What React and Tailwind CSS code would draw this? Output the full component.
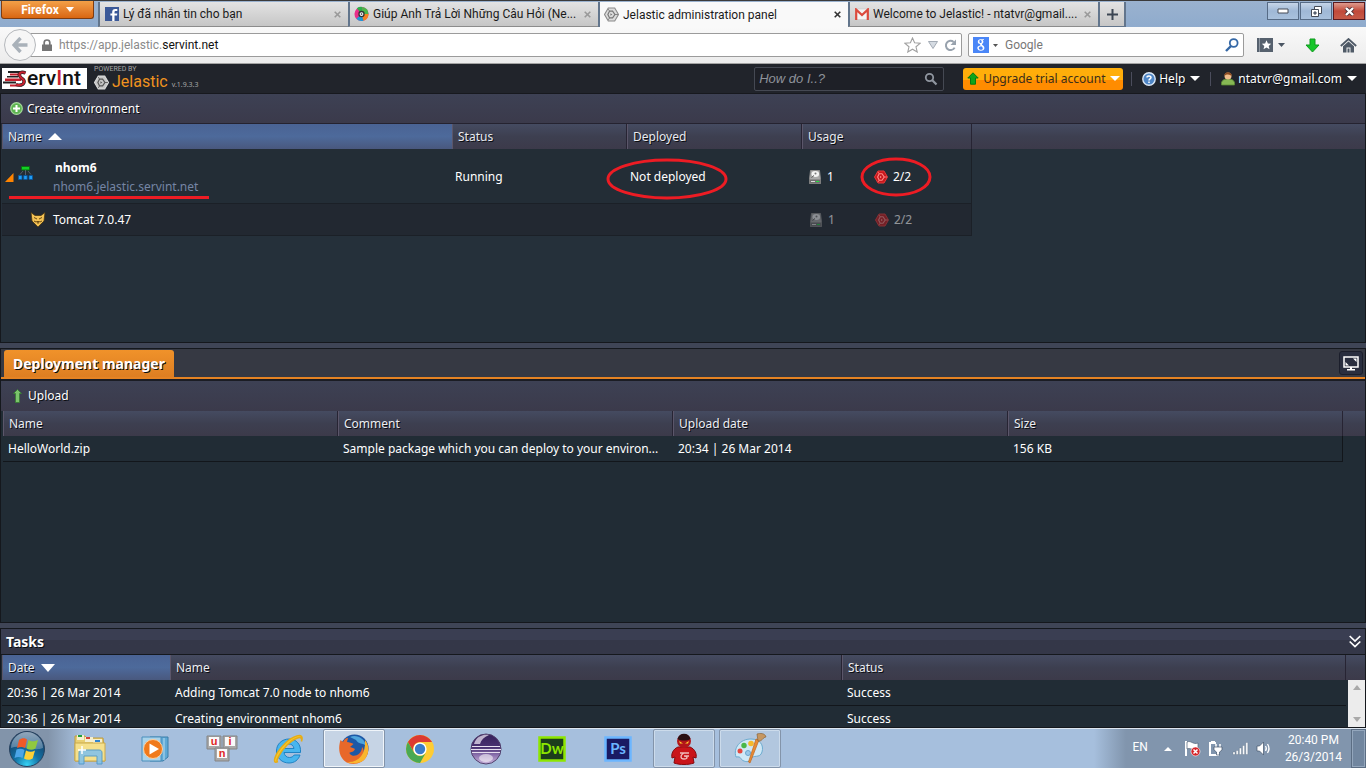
import React from "react";

const chrome = "font-['Roboto','Noto_Sans',sans-serif]";
const dash = "font-['Noto_Sans',sans-serif]";
const shadow = "[text-shadow:1px_1px_0_#0b0d12]";

/* ---------- small shared pieces ---------- */

function Caret({ className = "", up = false, w = 10, h = 5 }) {
  return (
    <svg width={w} height={h} viewBox="0 0 10 5" preserveAspectRatio="none" className={className} aria-hidden="true">
      <path d={up ? "M0 5L5 0L10 5Z" : "M0 0H10L5 5Z"} fill="currentColor" />
    </svg>
  );
}

function HexIcon({ size = 14, fill = "#a8a8a8", line = "#fff", edge = "#777" }) {
  return (
    <svg width={size} height={size} viewBox="0 0 14 14" aria-hidden="true">
      <path d="M4 1H10L13.5 7L10 13H4L0.5 7Z" fill={fill} stroke={edge} strokeWidth="1" />
      <path d="M5.2 3.8H8L10.2 7L8 10.2H5.2L3.6 7Z" fill="none" stroke={line} strokeWidth="1.1" />
      <path d="M10.200 7H13M5 3.600L4 2M5 10.400L4 12" stroke={line} strokeWidth=".8" />
      <path d="M6 5.800V8.200L7.800 7Z" fill={line} />
    </svg>
  );
}

function HeadCell({ children, active = false, className = "" }) {
  return (
    <th
      scope="col"
      className={`h-[25px] border-l border-l-[#5b566a] px-[5px] text-left font-normal ${
        active
          ? "bg-linear-to-b from-[#4a6394] via-[#4d6a9b] to-[#49587e]"
          : "border-r border-r-[#272433] bg-linear-to-b from-[#454b61] via-[#3d3f50] to-[#3c3a4a]"
      } ${className}`}
    >
      <span className="flex items-center gap-[6px]">{children}</span>
    </th>
  );
}

const gutter = "bg-linear-to-b from-[#454b61] via-[#3d3f50] to-[#3c3a4a] p-0";

/* ---------- browser window ---------- */

const FacebookIcon = () => (
  <svg width="14" height="14" viewBox="0 0 14 14" aria-hidden="true">
    <path d="M0 0H14V14H0Z" fill="#3b5998" />
    <path d="M9.5 14V8.6H12L12.3 6.6H9.5V5.2C9.5 4.4 9.9 4 10.7 4H12.3V2H10.2C8.2 2 7.2 3.1 7.2 5V6.6H5.4V8.6H7.2V14Z" fill="#fff" />
  </svg>
);

const WheelIcon = () => (
  <svg width="16" height="16" viewBox="0 0 16 16" aria-hidden="true">
    <circle cx="8" cy="8" r="7.5" fill="#e8308a" />
    <path d="M8 8L3 1.8A8 8 0 0 1 9 0.5Z" fill="#2fae4a" />
    <path d="M8 8L9 .5A7.5 7.5 0 0 1 15.5 8Z" fill="#4cb648" />
    <path d="M8 8H15.5A7.5 7.5 0 0 1 10 15.2Z" fill="#f58220" />
    <path d="M8 8L10 15.2A7.5 7.5 0 0 1 2.5 13Z" fill="#1c9ad6" />
    <circle cx="8" cy="8" r="3.4" fill="#333" />
    <circle cx="8" cy="8" r="2" fill="#fff" />
    <circle cx="8" cy="8" r="0.9" fill="#333" />
  </svg>
);

const GmailIcon = () => (
  <svg width="14" height="12" viewBox="0 0 14 12" aria-hidden="true">
    <path d="M1 1H13V11.5H1Z" fill="#f4f4f4" stroke="#c9c9c9" strokeWidth=".6" />
    <path d="M1.2 12V1.6L7 7L12.8 1.6V12" fill="none" stroke="#dc4a3d" strokeWidth="2.2" />
  </svg>
);

const tabs = [
  { title: "Lý đã nhắn tin cho bạn", icon: <FacebookIcon /> },
  { title: "Giúp Anh Trả Lời Những Câu Hỏi (Ne...", icon: <WheelIcon /> },
  { title: "Jelastic administration panel", icon: <HexIcon size={15} fill="#dcdcdc" line="#777" edge="#8a8a8a" />, active: true },
  { title: "Welcome to Jelastic! - ntatvr@gmail....", icon: <GmailIcon /> },
];

function TabStrip() {
  return (
    <div className="flex h-[27px] shrink-0 items-start border-t border-[#3b3b3b] bg-linear-to-b from-[#9ab2cf] to-[#8fabcd]">
      <button className="mr-[4px] ml-px flex h-[18px] w-[93px] shrink-0 items-center justify-center gap-[7px] rounded-b-[3px] border border-t-0 border-[#7d3c12] bg-linear-to-b from-[#f3a047] to-[#d9660f] text-[12px] font-bold text-white">
        Firefox <Caret w={8} h={5} />
      </button>
      <div className="flex h-[26px] min-w-0 flex-1 pt-px" role="tablist">
        {tabs.map((t) => (
          <div
            key={t.title}
            className={`flex w-[250px] min-w-0 items-center border-l-2 border-[#62758c] pl-1 ${
              t.active ? "bg-[#f9f9f9]" : "border-b border-b-[#8c8c8c] bg-linear-to-b from-[#e3e3e3] to-[#c6c6c6]"
            }`}
          >
            <button role="tab" aria-selected={!!t.active} className="flex min-w-0 flex-1 items-center gap-[4px] text-[12px] text-[#1a1a1a]">
              <span className="flex w-[15px] shrink-0 justify-center">{t.icon}</span>
              <span className="whitespace-nowrap">{t.title}</span>
            </button>
            <button aria-label="Close tab" className={`w-[14px] shrink-0 ${t.active ? "text-[#333]" : "text-[#999]"}`}>
              <svg width="7" height="7" viewBox="0 0 7 7"><path d="M.7 .7L6.3 6.3M6.3 .7L.7 6.3" stroke="currentColor" strokeWidth="1.6" /></svg>
            </button>
          </div>
        ))}
        <button aria-label="New tab" className="flex w-[28px] shrink-0 items-center justify-center border-x-2 border-b border-[#62758c] bg-linear-to-b from-[#e3e3e3] to-[#c6c6c6]">
          <svg width="11" height="11" viewBox="0 0 11 11"><path d="M5.5 0V11M0 5.5H11" stroke="#3c4653" strokeWidth="2" /></svg>
        </button>
      </div>
      <div className="mr-px flex gap-px pt-px">
        <button aria-label="Minimise" className="flex h-[18px] w-[32px] items-center justify-center border border-[#566b86] bg-linear-to-b from-[#c6d5e8] via-[#9fb8d6] to-[#a9c1dd]">
          <svg width="12" height="6" viewBox="0 0 12 6"><path d="M1 1H11V5H1Z" fill="#fff" stroke="#444b57" /></svg>
        </button>
        <button aria-label="Restore" className="flex h-[18px] w-[32px] items-center justify-center border border-[#566b86] bg-linear-to-b from-[#c6d5e8] via-[#9fb8d6] to-[#a9c1dd]">
          <svg width="13" height="11" viewBox="0 0 13 11"><path d="M4.5 .5H11.5V7.5H4.5Z" fill="#fff" stroke="#444b57" /><path d="M1.5 3.5H8.5V10.5H1.5Z" fill="#fff" stroke="#444b57" /><path d="M4 6H6V8H4Z" fill="#8ba5c4" stroke="#444b57" /></svg>
        </button>
        <button aria-label="Close" className="flex h-[18px] w-[32px] items-center justify-center border border-[#5a1a20] bg-linear-to-b from-[#dd9a8e] via-[#c1493a] to-[#c65a48]">
          <svg width="11" height="9" viewBox="0 0 11 9"><path d="M2 1L9 8M9 1L2 8" stroke="#4b3036" strokeWidth="4" /><path d="M2 1L9 8M9 1L2 8" stroke="#fff" strokeWidth="2.4" /></svg>
        </button>
      </div>
    </div>
  );
}

function NavBar() {
  return (
    <div className="flex h-[37px] shrink-0 items-center border-b border-[#a3a3a3] bg-linear-to-b from-[#f9f9f9] to-[#ececec] pr-[9px] pl-1">
      <button aria-label="Back" className="z-10 flex size-8 shrink-0 items-center justify-center rounded-full border border-[#b5b8bc] bg-[#f6f6f6]">
        <svg width="16" height="16" viewBox="0 0 16 16"><path d="M8.5 1L2 8L8.5 15M2.5 8H15.5" fill="none" stroke="#a9b1b9" strokeWidth="3.4" /></svg>
      </button>
      <div className="mr-[6px] -ml-[6px] flex h-6 min-w-0 flex-1 items-center rounded-r-[2px] border border-[#9b9b9b] bg-white pr-[4px] pl-[11px]">
        <svg width="10" height="12" viewBox="0 0 10 12" className="mr-[7px]" aria-hidden="true"><path d="M2.2 6V3.6A2.8 2.6 0 0 1 7.8 3.6V6" fill="none" stroke="#757575" strokeWidth="1.7" /><path d="M0 5.5H10V12H0Z" fill="#757575" /></svg>
        <a href="#address" className="flex-1 text-[12px] text-[#8a8a8a]">https://app.jelastic.<span className="text-[#111]">servint.net</span></a>
        <svg width="17" height="16" viewBox="0 0 17 16" className="mr-[7px]" aria-hidden="true"><path d="M8.5 1L10.6 5.8L16 6.3L12 9.8L13.2 15L8.5 12.2L3.8 15L5 9.8L1 6.3L6.4 5.8Z" fill="#fff" stroke="#a0a0a0" strokeWidth="1.1" /></svg>
        <svg width="10" height="8" viewBox="0 0 10 8" className="mr-[6px]" aria-hidden="true"><path d="M.5 .5H9.5L5 7.5Z" fill="#d5dbe2" stroke="#a3abb5" /></svg>
        <button aria-label="Reload"><svg width="13" height="13" viewBox="0 0 13 13"><path d="M10.6 8.6A4.6 4.6 0 1 1 9.6 3" fill="none" stroke="#98a2ad" strokeWidth="2" /><path d="M12 .5V6H6.5Z" fill="#98a2ad" /></svg></button>
      </div>
      <div className="mr-[13px] flex h-6 w-[276px] items-center rounded-[2px] border border-[#9b9b9b] bg-white px-[4px]">
        <svg width="16" height="16" viewBox="0 0 16 16" className="mr-1" aria-hidden="true">
          <path d="M0 0H16V16H0Z" fill="#4a86f7" />
          <path d="M11 2.2H7.5C5.8 2.2 4.8 3.4 4.8 4.7C4.8 6 5.8 7 7.2 7C7 7.6 7.1 8 7.5 8.4C5.6 8.5 4.3 9.4 4.3 11C4.3 12.6 5.8 13.7 7.8 13.7C10.3 13.7 11.4 12.4 11.4 10.9C11.4 9.5 10.6 8.9 9.7 8.2C8.8 7.5 8.8 7.2 9.4 6.7C10.2 6 10.4 5.5 10.4 4.6C10.4 3.9 10.1 3.4 9.7 3H11Z M8.7 4.8C8.7 5.7 8.3 6.1 7.7 6.1C6.8 6.1 6.4 5.2 6.4 4.3C6.4 3.5 6.8 3 7.4 3C8.3 3 8.7 4 8.7 4.8Z M9.8 11.2C9.8 12.2 9 12.8 7.9 12.8C6.6 12.8 5.8 12 5.8 11C5.8 9.9 6.8 9.2 8.3 9.2C9.2 9.8 9.8 10.3 9.8 11.2Z" fill="#fff" fillRule="evenodd" />
        </svg>
        <Caret w={5} h={3} className="mr-[7px] text-[#555]" />
        <input aria-label="Search with Google" placeholder="Google" className="min-w-0 flex-1 bg-transparent text-[12px] outline-none placeholder:text-[#777]" />
        <svg width="14" height="14" viewBox="0 0 14 14" aria-hidden="true"><circle cx="8.7" cy="5" r="3.9" fill="none" stroke="#3568a6" strokeWidth="1.8" /><path d="M6 8L1 13" stroke="#3568a6" strokeWidth="2.4" /></svg>
      </div>
      <button aria-label="Bookmarks" className="flex items-center gap-[5px] text-[#4b5663]">
        <svg width="16" height="14" viewBox="0 0 16 14"><path d="M0 0H16V14H0Z" fill="#56616e" /><path d="M2.5 0V14" stroke="#8f98a3" /><path d="M9.5 2.3L10.9 5.4L14.2 5.7L11.7 7.9L12.5 11.3L9.5 9.5L6.5 11.3L7.3 7.9L4.8 5.7L8.1 5.4Z" fill="#fff" /></svg>
        <Caret w={7} h={4} />
      </button>
      <button aria-label="Downloads" className="ml-[20px]"><svg width="15" height="15" viewBox="0 0 15 15"><path d="M5 1H10V7H14L7.5 14L1 7H5Z" fill="#16c62a" stroke="#0f9a1e" /></svg></button>
      <button aria-label="Home" className="ml-[20px]"><svg width="17" height="15" viewBox="0 0 17 15"><path d="M.8 8L8.5 1L16.2 8" fill="none" stroke="#4f5a67" strokeWidth="1.8" /><path d="M3 8.2L8.5 3.4L14 8.2V14.5H10.5V9.5H6.5V14.5H3Z" fill="#4f5a67" /><path d="M7.5 10.5H9.5V14.5H7.5Z" fill="#4f5a67" /></svg></button>
    </div>
  );
}

/* ---------- dashboard ---------- */

function ServIntLogo() {
  return (
    <div className="flex h-[21px] w-[85px] items-center bg-white">
      <svg width="25" height="21" viewBox="0 0 25 21" className="shrink-0" aria-hidden="true">
        <path d="M6 3H18V5H6ZM1 13.500H14V15.500H1ZM5 8H16V9.500H5Z" fill="#222" />
        <path d="M8 5.500H16V7.500H8ZM3 10.500H19V13H3ZM8 16.500H20V18.500H8Z" fill="#c7202d" />
        <path d="M23.500 5C19 3 16 5.500 18 8.500C19.500 11 23 11.500 22 14.500C21 17.500 17 17.500 14 16.500" fill="none" stroke="#222" strokeWidth="3.400" />
        <path d="M23.500 5C19 3 16 5.500 18 8.500C19.500 11 23 11.500 22 14.500C21 17.500 17 17.500 14 16.500" fill="none" stroke="#c7202d" strokeWidth="2.200" />
      </svg>
      <span className="font-['Roboto',sans-serif] text-[21px] leading-[21px] font-medium text-[#111]">erv<span className="text-[#c7202d]">I</span>nt</span>
    </div>
  );
}

function AppHeader() {
  return (
    <header className="flex h-[30px] shrink-0 items-center border-b border-[#17191e] bg-[#21242b] pr-[9px] pl-[2px]">
      <ServIntLogo />
      <div className="ml-[7px] flex flex-col">
        <span className="font-['Roboto',sans-serif] text-[7px] leading-[7px] text-[#a6a6a6]">POWERED BY</span>
        <div className="flex h-[18px] items-center">
          <HexIcon size={15} fill="#c6c6c6" line="#555" edge="#ddd" />
          <span className="ml-[3px] font-['Roboto',sans-serif] text-[16px] leading-[18px] text-[#f0931f]">Jelastic</span>
          <span className="mt-[6px] ml-1 text-[7px] leading-[8px] text-[#a6a6a6]">v.1.9.3.3</span>
        </div>
      </div>
      <div className="ml-auto flex h-6 w-[190px] items-center rounded-[2px] border border-[#454953] bg-[#1e2027] px-1">
        <input aria-label="How do I..?" placeholder="How do I..?" className="min-w-0 flex-1 bg-transparent font-['Liberation_Sans',Arial,sans-serif] text-[13px] italic outline-none placeholder:text-[#8f939b]" />
        <svg width="14" height="14" viewBox="0 0 14 14" className="mr-px" aria-hidden="true"><circle cx="5.5" cy="5.5" r="3.7" fill="none" stroke="#9096a0" strokeWidth="1.8" /><path d="M8.3 8.3L12.5 12.5" stroke="#9096a0" strokeWidth="2.2" /></svg>
      </div>
      <button className="ml-[19px] flex h-[22px] w-[160px] items-center rounded-[3px] bg-linear-to-b from-[#ffae0a] from-55% to-[#ff8c00] to-55% pr-[3px] pl-1 whitespace-nowrap text-[#3b2d1a]">
        <svg width="12" height="13" viewBox="0 0 12 13" className="mr-1 shrink-0"><path d="M6 .8L11.2 6H8.5V12.2H3.5V6H.8Z" fill="#0da51a" stroke="#087a10" /></svg>
        <span className="flex-1 text-left">Upgrade trial account</span>
        <Caret className="shrink-0 text-white" />
      </button>
      <span className="ml-[8px] h-[14px] w-px bg-[#4b4d5c]" />
      <button className={`ml-[10px] flex items-center gap-[3px] text-white ${shadow}`}>
        <svg width="14" height="14" viewBox="0 0 14 14"><circle cx="7" cy="7" r="6.2" fill="#4f86c6" stroke="#dbe7f5" strokeWidth="1.4" /><path d="M5 5.6C5 3.4 9 3.4 9 5.5C9 6.9 7 6.8 7 8.4M7 9.5V11" fill="none" stroke="#fff" strokeWidth="1.5" /></svg>
        Help <Caret className="ml-[2px]" />
      </button>
      <span className="ml-[10px] h-[14px] w-px bg-[#4b4d5c]" />
      <button className={`ml-[10px] flex items-center gap-[3px] text-white ${shadow}`}>
        <svg width="14" height="15" viewBox="0 0 14 15"><path d="M.5 14V11.5C1 9 3.5 8 7 8C10.500 8 13 9 13.500 11.500V14Z" fill="#86b854" stroke="#5b8a35" strokeWidth=".8" /><circle cx="7" cy="5" r="3.5" fill="#f0bd8b" /><path d="M3.300 5C3 0 11 0 10.700 5C9 4.200 8.500 3 5 3.800Z" fill="#8c4a20" /></svg>
        ntatvr@gmail.com <Caret className="ml-[2px]" />
      </button>
    </header>
  );
}

function DiskIcon() {
  return (
    <svg width="12" height="14" viewBox="0 0 12 14" aria-hidden="true">
      <path d="M1.500 .5H10.500L11.500 9.500V13.500H.5V9.500Z" fill="#a9a9a9" stroke="#8c8c8c" />
      <ellipse cx="6.300" cy="4" rx="3.800" ry="3" fill="#f4f4f4" />
      <circle cx="6.500" cy="3.600" r="1" fill="#777" />
      <path d="M2.500 7.500L5 5.500" stroke="#555" />
      <path d="M.5 9.500H11.500V13.500H.5Z" fill="#6f6f6f" />
      <path d="M2 11.500H6" stroke="#ddd" /><path d="M7 11.500H10" stroke="#1ee03c" />
    </svg>
  );
}

function Usage({ dim = false }) {
  return (
    <div className={`flex items-center ${dim ? "pl-[3px] opacity-50" : "pl-[2px]"}`}>
      <span className="flex w-[65px] items-center gap-[6px]"><DiskIcon />1</span>
      <span className="relative flex items-center gap-[5px]">
        <HexIcon size={14} fill="#c8181d" line="#ff8a88" edge="#e8383a" />2/2
        {!dim && (
          <svg width="72" height="40" viewBox="0 0 72 40" className="pointer-events-none absolute -top-[11px] -left-[14px] max-w-none" aria-hidden="true">
            <ellipse cx="36" cy="20" rx="34" ry="18" fill="none" stroke="#ed1c24" strokeWidth="3" />
          </svg>
        )}
      </span>
    </div>
  );
}

function Environments() {
  return (
    <section className="min-h-[249px] shrink-0 border-x border-b border-[#15181d] bg-[#25303a]">
      <div className="flex h-[30px] items-center border-b border-b-[#252330] bg-linear-to-b from-[#3d4154] to-[#3b3a4b] px-[9px]">
        <button className={`flex items-center gap-[4px] text-white ${shadow}`}>
          <svg width="13" height="13" viewBox="0 0 13 13"><circle cx="6.500" cy="6.500" r="5.800" fill="#5cb450" stroke="#a5d99b" strokeWidth="1.200" /><path d="M6.500 3V10M3 6.500H10" stroke="#fff" strokeWidth="2" /></svg>
          Create environment
        </button>
      </div>
      <div className="pl-px">
        <table className="w-full table-fixed border-separate border-spacing-0">
          <colgroup>
            <col className="w-[450px]" /><col className="w-[175px]" /><col className="w-[175px]" /><col className="w-[170px]" /><col />
          </colgroup>
          <thead className={`text-[#e8eaf0] ${shadow}`}>
            <tr>
              <HeadCell active>Name <Caret up w={14} h={7} className="text-white" /></HeadCell>
              <HeadCell>Status</HeadCell>
              <HeadCell>Deployed</HeadCell>
              <HeadCell>Usage</HeadCell>
              <td className={gutter} />
            </tr>
          </thead>
          <tbody className="text-white">
            <tr className="bg-[#232d36]">
              <td className="h-[55px] border-b border-[#1b2027] p-0 pt-[2px]">
                <div className="relative flex items-center">
                  <svg width="9" height="9" viewBox="0 0 9 9" className="ml-[3px]" aria-hidden="true"><path d="M8.500 0V9H0Z" fill="#ff8400" /></svg>
                  <svg width="15" height="14" viewBox="0 0 15 14" className="mb-[8px] ml-[4px]" aria-hidden="true">
                    <path d="M3.500 .5H11.500V4H3.500Z" fill="#12cf24" stroke="#0a7013" />
                    <path d="M7.500 4V9M5 5L2 8.500M10 5L13 8.500" stroke="#56616b" />
                    <path d="M.5 9.500H4V13.500H.5ZM5.700 9.500H9.200V13.500H5.700ZM11 9.500H14.500V13.500H11Z" fill="#1f9df5" stroke="#07549a" strokeWidth=".8" />
                  </svg>
                  <div className="ml-[20px]">
                    <div className="pl-[2px] leading-[19px] font-bold">nhom6</div>
                    <a href="#env" className="block leading-[19px] text-[#7585a5]">nhom6.jelastic.servint.net</a>
                  </div>
                  <span className="absolute -bottom-[3px] left-[7px] h-[3px] w-[200px] bg-[#ed1c24]" />
                </div>
              </td>
              <td className="border-b border-[#1b2027] px-[3px] pt-[2px]">Running</td>
              <td className="border-b border-[#1b2027] px-[3px] pt-[2px]">
                <span className="relative">Not deployed
                  <svg width="122" height="44" viewBox="0 0 122 44" className="pointer-events-none absolute -top-[11px] -left-[24px] max-w-none" aria-hidden="true">
                    <ellipse cx="61" cy="22" rx="59" ry="19" fill="none" stroke="#ed1c24" strokeWidth="3" />
                  </svg>
                </span>
              </td>
              <td className="border-r border-b border-[#1b2027] px-[5px] pt-[2px]"><Usage /></td>
              <td className="bg-[#25303a]" />
            </tr>
            <tr className="bg-[#222831]">
              <td className="h-[32px] border-b border-[#1b2027] pl-[28px]">
                <span className="flex items-center gap-[7px]">
                  <svg width="16" height="15" viewBox="0 0 16 15" aria-hidden="true"><path d="M1 .5L5 3.500H11L15 .5L14 9L8.500 14.500H7.500L2 9Z" fill="#f4c255" stroke="#473510" strokeWidth=".8" /><path d="M4 5.500L7 7M12 5.500L9 7M6.500 9.500H9.500L8 11.500ZM4 9L6 10M12 9L10 10" fill="none" stroke="#6b4b13" /></svg>
                  Tomcat 7.0.47
                </span>
              </td>
              <td className="border-b border-[#1b2027]" />
              <td className="border-b border-[#1b2027]" />
              <td className="border-r border-b border-[#1b2027] px-[5px]"><Usage dim /></td>
              <td className="bg-[#25303a]" />
            </tr>
          </tbody>
        </table>
      </div>
    </section>
  );
}

function Deployment() {
  return (
    <section className="flex min-h-0 flex-1 flex-col border border-[#15181d] bg-[#212c35]">
      <div className="flex h-[30px] shrink-0 items-end border-b-2 border-[#e58323] bg-[#363943] pr-[2px] pl-[3px]">
        <h2 className={`flex h-[27px] items-center rounded-t-[3px] bg-linear-to-b from-[#f0922a] to-[#dd7e22] px-[9px] text-[14px] font-bold text-white ${shadow}`}>Deployment manager</h2>
        <button aria-label="Full screen" className="mb-[2px] ml-auto flex size-[24px] items-center justify-center rounded-[3px] border border-[#1b1e2b] bg-[#292e3f]">
          <svg width="16" height="15" viewBox="0 0 16 15"><path d="M1 1H15V11H1Z" fill="none" stroke="#fff" strokeWidth="1.500" /><path d="M10 2.500H13.500V6ZM2.500 6V9.500H6Z" fill="#fff" /><path d="M7 11H9V13H12V14.500H4V13H7Z" fill="#fff" /></svg>
        </button>
      </div>
      <div className="flex h-[32px] shrink-0 items-center border-t-2 border-[#1b1d24] bg-linear-to-b from-[#3d4154] to-[#3b3a4b] px-[12px]">
        <button className={`flex items-center gap-[6px] text-white ${shadow}`}>
          <svg width="9" height="14" viewBox="0 0 9 14"><path d="M4.500 .5L8.500 4.500H6.500V13.500H2.500V4.500H.5Z" fill="#7cc46c" stroke="#357f30" strokeWidth=".8" /></svg>
          Upload
        </button>
      </div>
      <div className="min-h-0 flex-1 pl-[2px]">
        <table className="w-full table-fixed border-separate border-spacing-0">
          <colgroup><col /><col /><col /><col /><col className="w-[22px]" /></colgroup>
          <thead className={`text-[#eceef3] ${shadow}`}>
            <tr>
              <HeadCell>Name</HeadCell><HeadCell>Comment</HeadCell><HeadCell>Upload date</HeadCell><HeadCell>Size</HeadCell><td className={gutter} />
            </tr>
          </thead>
          <tbody className="whitespace-nowrap text-white">
            <tr>
              <td className="h-[26px] border-b border-[#12161b] px-[5px]">HelloWorld.zip</td>
              <td className="border-b border-[#12161b] px-[5px]">Sample package which you can deploy to your environ...</td>
              <td className="border-b border-[#12161b] px-[5px]">20:34 | 26 Mar 2014</td>
              <td className="border-r border-b border-[#12161b] px-[5px]">156 KB</td>
              <td />
            </tr>
          </tbody>
        </table>
      </div>
    </section>
  );
}

const tasks = [
  ["20:36 | 26 Mar 2014", "Adding Tomcat 7.0 node to nhom6", "Success"],
  ["20:36 | 26 Mar 2014", "Creating environment nhom6", "Success"],
];

function Tasks() {
  return (
    <section className="flex h-[100px] shrink-0 flex-col overflow-hidden border border-[#15181d] bg-[#212c35]">
      <div className="flex h-[26px] shrink-0 items-center justify-between border-b border-[#15181d] bg-linear-to-b from-[#3a3e52] from-45% to-[#343748] to-45% pr-1 pl-[5px]">
        <h2 className={`text-[14px] leading-[20px] font-bold text-white ${shadow}`}>Tasks</h2>
        <button aria-label="Collapse tasks"><svg width="12" height="13" viewBox="0 0 12 13"><path d="M.7 1L6 6L11.300 1M.7 6.500L6 11.500L11.300 6.500" fill="none" stroke="#fff" strokeWidth="1.700" /></svg></button>
      </div>
      <div className="relative pl-px">
        <table className="w-full table-fixed border-separate border-spacing-0">
          <colgroup><col className="w-[168px]" /><col /><col className="w-[504px]" /><col className="w-[19px]" /></colgroup>
          <thead className={`text-[#eceef3] ${shadow}`}>
            <tr>
              <HeadCell active>Date <Caret w={14} h={8} className="text-white" /></HeadCell><HeadCell>Name</HeadCell><HeadCell>Status</HeadCell><td className={gutter} />
            </tr>
          </thead>
          <tbody className="text-white">
            {tasks.map((row) => (
              <tr key={row[1]}>
                {row.map((c, i) => (
                  <td key={i} className="h-[26px] border-b border-[#12161b] px-[5px]">{c}</td>
                ))}
                <td />
              </tr>
            ))}
          </tbody>
        </table>
        <div className="absolute top-[25px] right-0 flex h-[47px] w-[17px] flex-col items-center justify-between bg-[#ececec] py-[5px] text-[#a9a9a9]">
          <button aria-label="Scroll up" className="flex"><Caret up w={8} h={5} /></button>
          <button aria-label="Scroll down" className="flex"><Caret w={8} h={5} /></button>
        </div>
      </div>
    </section>
  );
}

/* ---------- taskbar ---------- */

const StartIcon = () => (
  <svg width="38" height="38" viewBox="0 0 38 38" aria-hidden="true">
    <defs>
      <radialGradient id="orb" cx=".5" cy=".95" r=".9"><stop offset="0" stopColor="#35d2f5" /><stop offset=".4" stopColor="#1372a5" /><stop offset="1" stopColor="#16375c" /></radialGradient>
      <linearGradient id="gloss" x1="0" y1="0" x2="0" y2="1"><stop offset="0" stopColor="#d5e4ef" /><stop offset="1" stopColor="#6f93b1" /></linearGradient>
    </defs>
    <circle cx="19" cy="19" r="17.500" fill="url(#orb)" stroke="#27415e" />
    <path d="M3 18A16 16 0 0 1 35 18C25 22 13 14 3 18Z" fill="url(#gloss)" opacity=".65" />
    <path d="M11 10C14 7.500 17 8 19 9.500L17 18C14.500 16.500 12 16.700 9 18Z" fill="#ef5a28" />
    <path d="M20.500 10C23 11.500 26 12 30 10L27.500 18.500C24.500 20.500 21.500 20 18.500 18.500Z" fill="#90c83f" />
    <path d="M8.500 19.500C11.500 18.300 14 18.500 16.500 20L14.500 28C12 26.500 9.500 26.500 6.500 28Z" fill="#4ca5e8" />
    <path d="M18 20.500C21 22 24 22.300 27 20.500L24.700 28.500C21.500 30.500 18.500 30 16 28.500Z" fill="#fdd037" />
  </svg>
);

const FolderIcon = () => (
  <svg width="34" height="32" viewBox="0 0 34 32" aria-hidden="true">
    <path d="M2 3H12L13 5H30L32 28H2Z" fill="#e9cf72" stroke="#bf9b3f" />
    <path d="M4 2H11V7H4Z" fill="#f5efcf" /><path d="M5 2H9V4H5Z" fill="#23a03c" />
    <path d="M12 4H20V9H12Z" fill="#f5efcf" /><path d="M13 4H17V6H13Z" fill="#d44436" />
    <path d="M20 6H29V11H20Z" fill="#f5efcf" /><path d="M22 7H27V9H22Z" fill="#2f83cf" />
    <path d="M2 10H32V28H2Z" fill="#f5e08c" stroke="#c9a94d" />
    <path d="M6 31V20C6 18 7 17 9 17H26C28 17 29 18 29 20V31H24V23H11V31Z" fill="#86c3e8" stroke="#4c97c9" opacity=".9" />
    <path d="M9 13V21M5 17H13" stroke="#fff" strokeWidth="1.500" />
  </svg>
);

const PlayerIcon = () => (
  <svg width="30" height="28" viewBox="0 0 30 28" aria-hidden="true">
    <path d="M9 2H27V22L22 26H9Z" fill="#5fa9d6" stroke="#3c7ea9" /><path d="M23 3V25" stroke="#b8dcf0" />
    <path d="M1 2H20V26H1Z" fill="#a9d3ea" stroke="#4a8fbc" />
    <circle cx="12" cy="14" r="9.500" fill="#f07a1b" stroke="#fbd0a1" /><path d="M8.500 8.500L18 14L8.500 19.500Z" fill="#fff" />
  </svg>
);

const KeysIcon = () => (
  <svg width="32" height="28" viewBox="0 0 32 28" aria-hidden="true">
    {[[1, 1, "u"], [17, 1, "i"], [9, 13, "n"]].map(([x, y, c]) => (
      <g key={c}>
        <path d={`M${x} ${y}h14v13h-14Z`} fill="#a9a9a9" stroke="#858585" />
        <path d={`M${x + 2} ${y + 1}h10v9h-10Z`} fill="#fafafa" />
        <text x={x + 7} y={y + 9} textAnchor="middle" fontSize="11" fontWeight="700" fontFamily="Liberation Sans, sans-serif" fill="#e02727">{c}</text>
      </g>
    ))}
  </svg>
);

const IEIcon = () => (
  <svg width="32" height="32" viewBox="0 0 32 32" aria-hidden="true">
    <path d="M28.500 19.500H12C12.500 22.500 14.500 24.500 17.500 24.500C19.500 24.500 21.200 23.600 22.200 22H28C26.500 26.800 22.500 30 17 30C10 30 4.500 25 4.500 18C4.500 11 10 6 17 6C24.500 6 29.200 11.500 28.500 19.500ZM12 15.500H22C21.500 12.700 19.600 11 17 11C14.400 11 12.600 12.700 12 15.500Z" fill="#48b5ee" stroke="#1f83c4" />
    <path d="M6 28.500C-1 32 3 20.500 12 11.500C20 3 33 -2 29.500 8.500C31 1 22 5.500 15 12C7 20 3 29.500 6 28.500Z" fill="#f6c92d" stroke="#e6ac16" strokeWidth="1.500" />
  </svg>
);

const FirefoxIcon = () => (
  <svg width="32" height="32" viewBox="0 0 32 32" aria-hidden="true">
    <circle cx="16.500" cy="15.500" r="14" fill="#1d58a6" /><path d="M12 4C18 1 27 5 28 13C24 9 21 12 18 7Z" fill="#4fa5dc" />
    <path d="M2.500 7L5 9C7 5 9 5 10 5L9 9C11 9 14 10 15.500 11L12 14C14 15 16 15 17 16C15 21 10 18 12 21C15 25 24 22 24 14C26 16 26 19 25 21C28 17 28 10 27 7C32 13 31 22 26 27C19 33 8 32 4 25C0 19 1 12 2.500 7Z" fill="#e8682a" />
    <path d="M27 7C32 13 31 22 26 27C21 31 14 31 9 29C20 30 28 22 27 7Z" fill="#f9b62e" />
  </svg>
);

const ChromeIcon = () => (
  <svg width="30" height="30" viewBox="0 0 30 30" aria-hidden="true">
    <circle cx="15" cy="15" r="14" fill="#fc3" />
    <path d="M2.900 8A14 14 0 0 1 27.100 8H15A7 7 0 0 0 9 18.500Z" fill="#dc3a32" />
    <path d="M2.900 8L9 18.500A7 7 0 0 0 21 18.500L15 29A14 14 0 0 1 2.900 8Z" fill="#49a952" />
    <circle cx="15" cy="15" r="6.600" fill="#fff" /><circle cx="15" cy="15" r="5.200" fill="#3a7cc9" />
  </svg>
);

const EclipseIcon = () => (
  <svg width="32" height="32" viewBox="0 0 32 32" aria-hidden="true">
    <defs><linearGradient id="ecl" x1="0" y1="0" x2="0" y2="1"><stop offset="0" stopColor="#35205a" /><stop offset=".45" stopColor="#4a3273" /><stop offset=".7" stopColor="#8a70ad" /><stop offset="1" stopColor="#cdb6de" /></linearGradient></defs>
    <circle cx="16" cy="16" r="15" fill="url(#ecl)" stroke="#51406d" />
    <path d="M4 11C6 3 14 1 19 2C14 4 11 7 10 11Z" fill="#e9e1f2" opacity=".75" />
    <ellipse cx="16" cy="25" rx="7" ry="4" fill="#fff" opacity=".55" />
    <path d="M2 13.500H30M1 16.500H31M2 19.500H30" stroke="#e7dff0" strokeWidth="1.200" />
  </svg>
);

const AdobeIcon = ({ label, color, bg }) => (
  <svg width="30" height="28" viewBox="0 0 30 28" role="img" aria-label={label}>
    <path d="M2.500 2.500H27.500V25.500H2.500Z" fill={bg} stroke={color} strokeWidth="2.500" />
    <text x="15" y="18.500" textAnchor="middle" fontSize="15" fontWeight="700" fontFamily="Lato, sans-serif" fill={color}>{label}</text>
  </svg>
);

const GarenaIcon = () => (
  <svg width="26" height="32" viewBox="0 0 26 32" aria-hidden="true">
    <path d="M7 14C2 16 0 21 1 25L4 24L3 30C9 32 17 32 23 30L22 24L25 25C26 21 24 16 19 14Z" fill="#c9141a" stroke="#850b0f" />
    <circle cx="13" cy="8" r="7" fill="#b3151a" /><path d="M6.500 6C8 -1 18 -1 19.500 6C16 8 10 8 6.500 6Z" fill="#2a1113" />
    <path d="M8 8L12 10.500H9ZM18 8L14 10.500H17Z" fill="#ffd42e" />
    <path d="M9 20H18M13 20C9 22 9 26 13 26C17 26 17 23 13 23H18" fill="none" stroke="#f0b9b9" strokeWidth="1.300" />
  </svg>
);

const PaintIcon = () => (
  <svg width="34" height="32" viewBox="0 0 34 32" aria-hidden="true">
    <path d="M3 24C0 15 7 6 18 6C27 6 31 12 29 19C27 26 20 21 18 26C17 29 13 29 11 28C7 27 9 23 3 24Z" fill="#cfe8f6" stroke="#6cabcf" />
    <circle cx="7" cy="18" r="2.500" fill="#e4483f" /><circle cx="11" cy="12.500" r="2.700" fill="#49b749" /><circle cx="18" cy="10.500" r="2.800" fill="#f5b92c" /><circle cx="15" cy="20" r="2.500" fill="#9cc9e8" stroke="#6aa6cf" />
    <path d="M26 7L17 30L15.500 29L23 6Z" fill="#e98b33" stroke="#bd661f" strokeWidth=".7" />
    <path d="M24 1C27 0 32 0 33 4C30 4 29 9 25 8Z" fill="#c69761" stroke="#8a6336" strokeWidth=".7" />
  </svg>
);

const apps = [
  { name: "Explorer", icon: <FolderIcon /> },
  { name: "Media Player", icon: <PlayerIcon /> },
  { name: "UniKey", icon: <KeysIcon /> },
  { name: "Internet Explorer", icon: <IEIcon /> },
  { name: "Firefox", icon: <FirefoxIcon />, look: "border-[#8394aa] bg-[#c6d4e5] shadow-[inset_0_0_0_1px_#f0f5fa]" },
  { name: "Chrome", icon: <ChromeIcon /> },
  { name: "Eclipse", icon: <EclipseIcon /> },
  { name: "Dreamweaver", icon: <AdobeIcon label="Dw" color="#8de600" bg="#1c3e1c" /> },
  { name: "Photoshop", icon: <AdobeIcon label="Ps" color="#6cb6ff" bg="#1a1a63" /> },
  { name: "Garena", icon: <GarenaIcon />, look: "border-[#8394aa] bg-[#b2c7df] shadow-[inset_0_0_0_1px_#ccdbeb]" },
  { name: "Paint", icon: <PaintIcon />, look: "border-[#8394aa] bg-[#b2c7df] shadow-[inset_0_0_0_1px_#ccdbeb]" },
];

function Taskbar() {
  return (
    <footer className="flex h-[40px] shrink-0 items-stretch border-t border-[#dde6f0] bg-[#a6bfdd] text-[12px]">
      <button aria-label="Start" className="flex w-[80px] items-center bg-linear-to-r from-[#8294aa] from-60% to-[#a6bfdd] pl-[8px]"><StartIcon /></button>
      <div className="-ml-[21px] flex gap-[4px]">
        {apps.map((a) => (
          <button key={a.name} aria-label={a.name} className={`flex w-[62px] items-center justify-center rounded-[2px] border ${a.look || "border-transparent"}`}>{a.icon}</button>
        ))}
      </div>
      <div className="ml-auto flex items-center bg-linear-to-r from-[#a6bfdd] to-[#8195ad] to-[32px] pl-[38px] text-white">
        <span className="mr-[16px] pb-[4px]">EN</span>
        <Caret up w={8} h={4} className="mr-[12px]" />
        <svg width="17" height="17" viewBox="0 0 17 17" className="mr-[7px]" role="img" aria-label="Action center"><path d="M2 1V16" stroke="#fff" strokeWidth="2" /><path d="M3 2C7 0 9 5 14 3V10C9 12 7 7 3 9Z" fill="#fff" stroke="#4f6075" strokeWidth=".7" /><circle cx="11.500" cy="11.500" r="4.500" fill="#d7262a" stroke="#fff" strokeWidth=".6" /><path d="M9.500 9.500L13.500 13.500M13.500 9.500L9.500 13.500" stroke="#fff" strokeWidth="1.500" /></svg>
        <svg width="16" height="16" viewBox="0 0 16 16" className="mr-[8px]" role="img" aria-label="Power"><path d="M8 2H2V14H10V12" fill="none" stroke="#fff" strokeWidth="2" /><path d="M3 .5H7" stroke="#fff" /><path d="M8 3V6M12 3V6" stroke="#fff" strokeWidth="1.500" /><path d="M6 6H14V9L11.500 11V14H8.500V11L6 9Z" fill="#fff" stroke="#43556b" strokeWidth=".7" /></svg>
        <svg width="17" height="13" viewBox="0 0 17 13" className="mr-[7px]" role="img" aria-label="Network"><path d="M1 10H3V12.500H1ZM4.200 8.500H6.200V12.500H4.200ZM7.400 6H9.400V12.500H7.400ZM10.600 3.500H12.600V12.500H10.600ZM13.800 .5H15.800V12.500H13.800Z" fill="#fff" stroke="#4f6075" strokeWidth=".3" /></svg>
        <svg width="16" height="15" viewBox="0 0 16 15" className="mr-[13px]" role="img" aria-label="Volume"><path d="M1 5H3.500L7.500 1V14L3.500 10H1Z" fill="#fff" stroke="#43556b" strokeWidth=".7" /><path d="M9.500 5C10.500 6.500 10.500 8.500 9.500 10M11.500 3C13.500 6 13.500 9 11.500 12" fill="none" stroke="#fff" strokeWidth="1.300" /></svg>
        <div className="mr-[9px] text-center leading-[17px]"><div>20:40 PM</div><div>26/3/2014</div></div>
        <button aria-label="Show desktop" className="h-full w-[15px] border border-[#5b6d83] bg-[#71869f] shadow-[inset_0_0_0_1px_#93a6bc]" />
      </div>
    </footer>
  );
}

export default function App() {
  return (
    <div className={`flex h-screen flex-col overflow-hidden ${chrome}`}>
      <TabStrip />
      <NavBar />
      <main className={`flex min-h-0 flex-1 flex-col bg-[#3f4556] text-[12px] leading-[18px] ${dash}`}>
        <AppHeader />
        <div className="flex min-h-0 flex-1 flex-col gap-[5px]">
          <Environments />
          <Deployment />
          <Tasks />
        </div>
      </main>
      <Taskbar />
    </div>
  );
}
